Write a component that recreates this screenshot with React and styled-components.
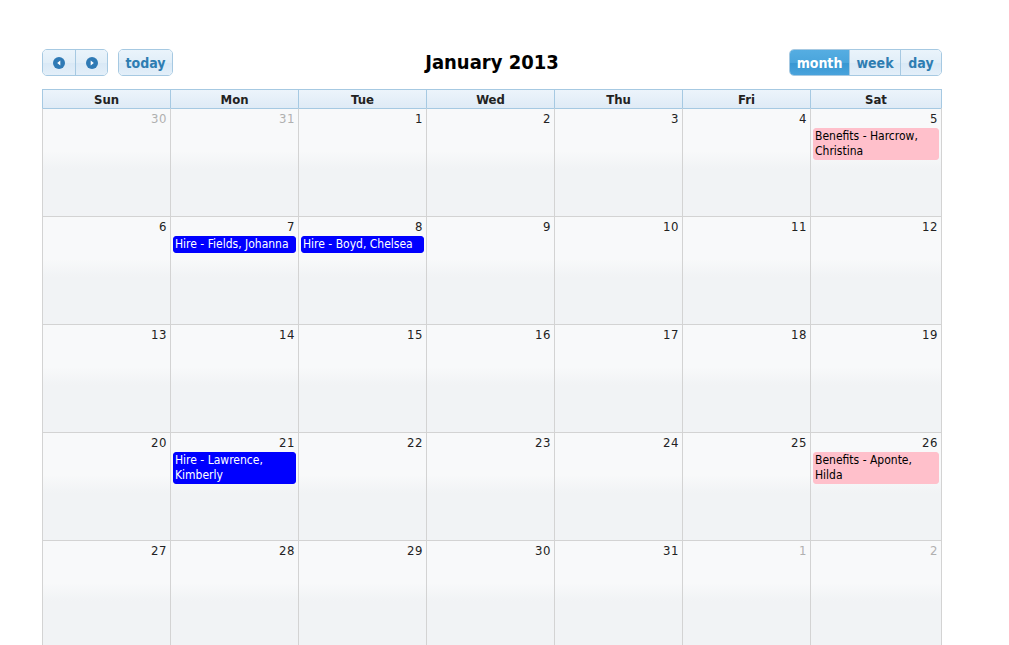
import React from "react";
import styled, { createGlobalStyle } from "styled-components";

const Global = createGlobalStyle`
  html, body { margin: 0; padding: 0; background: #fff; }
  body { font-family: "DejaVu Sans Condensed", "DejaVu Sans", Verdana, sans-serif; }
`;

const Page = styled.div`
  width: 1009px;
  height: 645px;
  overflow: hidden;
  padding: 49px 0 0 42px;
  box-sizing: border-box;
`;

const Calendar = styled.div`
  width: 900px;
`;

const Toolbar = styled.div`
  display: grid;
  grid-template-columns: 1fr auto 1fr;
  align-items: center;
  height: 27px;
  margin-bottom: 13px;
`;

const Left = styled.div`
  display: flex;
  gap: 10px;
`;

const Right = styled.div`
  display: flex;
  justify-content: flex-end;
`;

const Title = styled.h2`
  margin: 0;
  font-size: 20px;
  font-weight: bold;
  color: #000;
  line-height: 27px;
  position: relative;
  left: 0px;
`;

const Group = styled.div`
  display: flex;
  border: 1px solid #a6c9e2;
  border-radius: 5px;
  overflow: hidden;
`;

const Button = styled.button`
  height: 25px;
  padding: 0;
  width: ${(p) => p.$w}px;
  border: none;
  border-left: ${(p) => (p.$first ? "none" : "1px solid #a6c9e2")};
  background: ${(p) =>
    p.$active
      ? "linear-gradient(#55ade2 0%, #4aa5dc 50%, #3797d2 52%, #49a3dc 100%)"
      : "linear-gradient(#eaf4fb 0%, #e1eef8 50%, #d9e9f6 52%, #e3eff9 100%)"};
  color: ${(p) => (p.$active ? "#fff" : "#2e7db2")};
  font-family: inherit;
  font-weight: bold;
  font-size: 14px;
  display: flex;
  align-items: center;
  justify-content: center;
  cursor: pointer;
`;

const Grid = styled.div`
  display: grid;
  grid-template-columns: repeat(6, 128px) 1fr;
  border-right: 1px solid #d3d3d3;
`;

const HeadCell = styled.div`
  height: 18px;
  line-height: 19px;
  text-align: center;
  font-size: 13px;
  font-weight: bold;
  color: #222;
  background: linear-gradient(#ecf4fb, #dfebf6);
  border-top: 1px solid #a6c9e2;
  border-left: 1px solid #a6c9e2;
  ${(p) => p.$last && "border-right: 1px solid #a6c9e2; margin-right: -1px;"}
`;

const DayCell = styled.div`
  height: 108px;
  box-sizing: border-box;
  border-left: 1px solid #d3d3d3;
  border-top: 1px solid ${(p) => (p.$firstRow ? "#a6c9e2" : "#d3d3d3")};
  background: linear-gradient(#f8f9fa 0px, #f8f9fa 42px, #f1f3f5 60px, #f1f3f5 100%);
  display: flex;
  flex-direction: column;
`;

const DayNum = styled.div`
  text-align: right;
  font-size: 13px;
  line-height: 15px;
  padding: 2px 3px 2px 0;
  color: ${(p) => (p.$other ? "#b0b0b0" : "#222")};
  letter-spacing: 0.5px;
`;

const Event = styled.div`
  margin: 0 2px;
  border: 1px solid ${(p) => (p.$kind === "hire" ? "#0000ff" : "#ffc0cb")};
  background: ${(p) => (p.$kind === "hire" ? "#0000ff" : "#ffc0cb")};
  color: ${(p) => (p.$kind === "hire" ? "#fff" : "#000")};
  border-radius: 3px;
  font-size: 12px;
  line-height: 15px;
  padding: 0 1px;
`;

const Arrow = ({ dir }) => (
  <svg width="12" height="12" viewBox="0 0 12 12">
    <circle cx="6" cy="6" r="6" fill="#2f7ab5" />
    {dir === "left" ? (
      <path d="M7.3 3.4 L4.2 6 L7.3 8.6 Z" fill="#fff" />
    ) : (
      <path d="M4.7 3.4 L7.8 6 L4.7 8.6 Z" fill="#fff" />
    )}
  </svg>
);

const days = ["Sun", "Mon", "Tue", "Wed", "Thu", "Fri", "Sat"];

const events = {
  5: [{ kind: "ben", text: "Benefits - Harcrow, Christina" }],
  7: [{ kind: "hire", text: "Hire - Fields, Johanna" }],
  8: [{ kind: "hire", text: "Hire - Boyd, Chelsea" }],
  21: [{ kind: "hire", text: "Hire - Lawrence, Kimberly" }],
  26: [{ kind: "ben", text: "Benefits - Aponte, Hilda" }],
};

const cells = [{ d: 30, m: -1 }, { d: 31, m: -1 }];
for (let d = 1; d <= 31; d++) cells.push({ d, m: 0 });
cells.push({ d: 1, m: 1 }, { d: 2, m: 1 });

export default function App() {
  return (
    <>
      <Global />
      <Page>
        <Calendar>
          <Toolbar>
            <Left>
              <Group>
                <Button $first $w={32} aria-label="prev">
                  <Arrow dir="left" />
                </Button>
                <Button $w={32} aria-label="next">
                  <Arrow dir="right" />
                </Button>
              </Group>
              <Group>
                <Button $first $w={53}>today</Button>
              </Group>
            </Left>
            <Title>January 2013</Title>
            <Right>
              <Group>
                <Button $first $active $w={59}>month</Button>
                <Button $w={51}>week</Button>
                <Button $w={41}>day</Button>
              </Group>
            </Right>
          </Toolbar>
          <Grid>
            {days.map((d, i) => (
              <HeadCell key={d} $last={i === 6}>{d}</HeadCell>
            ))}
            {cells.map((c, i) => (
              <DayCell key={i} $firstRow={i < 7}>
                <DayNum $other={c.m !== 0}>{c.d}</DayNum>
                {c.m === 0 &&
                  (events[c.d] || []).map((e, j) => (
                    <Event key={j} $kind={e.kind}>{e.text}</Event>
                  ))}
              </DayCell>
            ))}
          </Grid>
        </Calendar>
      </Page>
    </>
  );
}
